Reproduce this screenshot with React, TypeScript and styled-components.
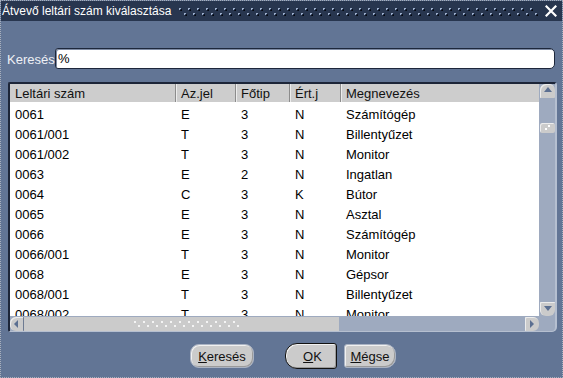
import React from "react";
import styled, { createGlobalStyle } from "styled-components";

const Global = createGlobalStyle`
  html, body { margin: 0; padding: 0; background: #627595; }
  body { font-family: "Liberation Sans", Arial, sans-serif; }
`;

const Window = styled.div`
  width: 563px;
  height: 378px;
  box-sizing: border-box;
  background: #627595;
  border: 1px dotted #a9b0bc;
  display: flex;
  flex-direction: column;
  overflow: hidden;
`;

const TitleBar = styled.div`
  height: 20px;
  flex: none;
  background: #28364f;
  display: flex;
  align-items: center;
  padding: 0 5px 0 1px;
`;

const Title = styled.div`
  color: #ffffff;
  font-size: 12px;
  white-space: nowrap;
`;

const Grip = styled.svg`
  flex: 1;
  height: 12px;
  margin: 0 6px 0 8px;
`;

const Close = styled.svg`
  width: 12px;
  height: 12px;
  flex: none;
`;

const Body = styled.div`
  flex: 1;
  display: flex;
  flex-direction: column;
  padding: 0 5px 0 6px;
`;

const SearchRow = styled.div`
  display: flex;
  align-items: center;
  margin-top: 27px;
  margin-right: 2px;
  height: 21px;
`;

const Label = styled.label`
  color: #eef0f5;
  font-size: 13px;
  width: 48px;
  flex: none;
  padding-top: 1px;
`;

const Input = styled.div`
  flex: 1;
  height: 21px;
  box-sizing: border-box;
  background: #ffffff;
  border: 1px solid #1d273b;
  border-radius: 3px 5px 5px 3px;
  box-shadow: inset 1px 1px 0 #7d8aa3;
  font-size: 13px;
  color: #000;
  line-height: 19px;
  padding-left: 2px;
`;

const Frame = styled.div`
  margin-top: 13px;
  margin-left: 1px;
  height: 250px;
  box-sizing: border-box;
  border-top: 2px solid #1c2538;
  border-left: 2px solid #1c2538;
  border-right: 2px solid #b5bfd0;
  border-bottom: 1px solid #b5bfd0;
  border-radius: 2px 3px 5px 2px;
  background: #9eaabf;
  display: grid;
  grid-template-columns: 1fr 15px;
  grid-template-rows: 1fr 14px;
  gap: 1px;
`;

const Content = styled.div`
  background: #ffffff;
  overflow: hidden;
`;

const COLS = "165px 60px 54px 51px 1fr";

const HeaderRow = styled.div`
  display: grid;
  grid-template-columns: ${COLS};
  height: 18px;
  background: #cdcdcd;
`;

const HeaderCell = styled.div<{ $first?: boolean }>`
  box-sizing: border-box;
  border-left: ${(p) => (p.$first ? "none" : "1px solid #8c8c8c")};
  box-shadow: ${(p) => (p.$first ? "none" : "inset 1px 0 0 #ececec")};
  padding: 2px 0 0 5px;
  font-size: 13px;
  line-height: 16px;
  color: #111;
  white-space: nowrap;
`;

const Rows = styled.div`
  padding-top: 3px;
`;

const Row = styled.div`
  display: grid;
  grid-template-columns: ${COLS};
  height: 20px;
  line-height: 20px;
  font-size: 13px;
  color: #000;
`;

const Cell = styled.div<{ $first?: boolean }>`
  padding-left: ${(p) => (p.$first ? "5px" : "6px")};
  white-space: nowrap;
`;

const VScroll = styled.div`
  display: flex;
  flex-direction: column;
`;

const HScroll = styled.div`
  display: flex;
`;

const ScrollBtn = styled.div<{ $dir: "up" | "down" | "left" | "right" }>`
  flex: none;
  width: ${(p) => (p.$dir === "up" || p.$dir === "down" ? "15px" : "14px")};
  height: 14px;
  box-sizing: border-box;
  background: #cbcbcb;
  display: flex;
  align-items: center;
  justify-content: center;
  border-radius: ${(p) =>
    p.$dir === "up"
      ? "6px 6px 1px 1px"
      : p.$dir === "down"
      ? "1px 1px 6px 6px"
      : p.$dir === "left"
      ? "6px 1px 1px 6px"
      : "1px 6px 6px 1px"};
  border-right: ${(p) => (p.$dir === "left" ? "1px solid #6e7b92" : "none")};
  box-shadow: inset 1px 1px 0 #ececec;
`;

const Spacer = styled.div`
  flex: 1;
`;

const VThumb = styled.div`
  margin-top: 25px;
  height: 10px;
  width: 15px;
  background: #cbcbcb;
  border-radius: 2px;
  box-shadow: inset 1px 1px 0 #ececec;
  background-image:
    radial-gradient(circle at 1px 1px, #ffffff 0.8px, transparent 1.2px),
    radial-gradient(circle at 1px 1px, #ffffff 0.8px, transparent 1.2px);
  background-size: 3px 3px, 3px 3px;
  background-position: 5px 5px, 8px 2px;
  background-repeat: no-repeat;
`;

const HThumb = styled.div`
  width: 315px;
  height: 14px;
  background-color: #cbcbcb;
  display: flex;
  align-items: center;
  justify-content: center;
`;

const HGrip = styled.div`
  width: 108px;
  height: 9px;
  margin-left: 12px;
  background-image:
    radial-gradient(circle at 1px 1px, #f4f4f4 0.8px, transparent 1.2px),
    radial-gradient(circle at 1px 1px, #f4f4f4 0.8px, transparent 1.2px);
  background-size: 9px 9px;
  background-position: 0 1px, 4px 5px;
`;

const Corner = styled.div``;

const ButtonRow = styled.div`
  display: flex;
  align-items: center;
  margin-top: 11px;
  padding-left: 183px;
`;

const Button = styled.button<{ $kind: "pill" | "default" | "right" }>`
  font-family: "Liberation Sans", Arial, sans-serif;
  font-size: 13px;
  color: #111;
  background: #cbcbcb;
  padding: 0;
  box-sizing: border-box;
  width: ${(p) => (p.$kind === "pill" ? "64px" : "52px")};
  height: ${(p) => (p.$kind === "default" ? "26px" : "24px")};
  margin-left: ${(p) => (p.$kind === "default" ? "31px" : p.$kind === "right" ? "7px" : "0")};
  border: ${(p) => (p.$kind === "default" ? "1px solid #111" : "1px solid #aab3c3")};
  border-radius: ${(p) =>
    p.$kind === "pill" ? "9px" : p.$kind === "default" ? "12px 3px 3px 12px" : "3px 10px 10px 3px"};
  box-shadow: inset 1px 1px 0 #f0f0f0, inset -1px -1px 0 #9a9a9a;
  padding-left: ${(p) => (p.$kind === "default" ? "3px" : "0")};
`;

const rows = [
  ["0061", "E", "3", "N", "Számítógép"],
  ["0061/001", "T", "3", "N", "Billentyűzet"],
  ["0061/002", "T", "3", "N", "Monitor"],
  ["0063", "E", "2", "N", "Ingatlan"],
  ["0064", "C", "3", "K", "Bútor"],
  ["0065", "E", "3", "N", "Asztal"],
  ["0066", "E", "3", "N", "Számítógép"],
  ["0066/001", "T", "3", "N", "Monitor"],
  ["0068", "E", "3", "N", "Gépsor"],
  ["0068/001", "T", "3", "N", "Billentyűzet"],
  ["0068/002", "T", "3", "N", "Monitor"],
];

const headers = ["Leltári szám", "Az.jel", "Főtip", "Ért.j", "Megnevezés"];

const Tri = ({ dir }: { dir: "up" | "down" | "left" | "right" }) => {
  const pts =
    dir === "up"
      ? "1,6 9,6 5,1"
      : dir === "down"
      ? "1,2 9,2 5,7"
      : dir === "left"
      ? "6,1 6,9 2,5"
      : "3,1 3,9 7,5";
  return (
    <svg width="10" height="10" viewBox="0 0 10 10">
      <polygon points={pts} fill="#5b6f91" />
    </svg>
  );
};

export default function App() {
  return (
    <>
      <Global />
      <Window>
        <TitleBar>
          <Title>Átvevő leltári szám kiválasztása</Title>
          <Grip>
            <defs>
              <pattern id="tgrip" width="9" height="12" patternUnits="userSpaceOnUse">
                <rect x="0" y="3" width="2" height="2" fill="#9fb0cc" />
                <rect x="1" y="4" width="1" height="1" fill="#2c3d5c" />
                <rect x="2" y="5" width="1" height="1" fill="#05090f" />
                <rect x="1" y="5" width="1" height="1" fill="#0b1220" />
                <rect x="2" y="4" width="1" height="1" fill="#0b1220" />
                <rect x="5" y="8" width="2" height="2" fill="#9fb0cc" />
                <rect x="6" y="9" width="1" height="1" fill="#2c3d5c" />
                <rect x="7" y="10" width="1" height="1" fill="#05090f" />
                <rect x="6" y="10" width="1" height="1" fill="#0b1220" />
                <rect x="7" y="9" width="1" height="1" fill="#0b1220" />
              </pattern>
            </defs>
            <rect x="0" y="0" width="100%" height="12" fill="url(#tgrip)" />
          </Grip>
          <Close viewBox="0 0 12 12">
            <path d="M1.5 1.5 L10.5 10.5 M10.5 1.5 L1.5 10.5" stroke="#ffffff" strokeWidth="2.2" strokeLinecap="square" />
          </Close>
        </TitleBar>
        <Body>
          <SearchRow>
            <Label>Keresés</Label>
            <Input>%</Input>
          </SearchRow>
          <Frame>
            <Content>
              <HeaderRow>
                {headers.map((h, i) => (
                  <HeaderCell key={h} $first={i === 0}>
                    {h}
                  </HeaderCell>
                ))}
              </HeaderRow>
              <Rows>
                {rows.map((r) => (
                  <Row key={r[0]}>
                    {r.map((c, i) => (
                      <Cell key={i} $first={i === 0}>
                        {c}
                      </Cell>
                    ))}
                  </Row>
                ))}
              </Rows>
            </Content>
            <VScroll>
              <ScrollBtn $dir="up">
                <Tri dir="up" />
              </ScrollBtn>
              <VThumb />
              <Spacer />
              <ScrollBtn $dir="down">
                <Tri dir="down" />
              </ScrollBtn>
            </VScroll>
            <HScroll>
              <ScrollBtn $dir="left">
                <Tri dir="left" />
              </ScrollBtn>
              <HThumb>
                <HGrip />
              </HThumb>
              <Spacer />
              <ScrollBtn $dir="right">
                <Tri dir="right" />
              </ScrollBtn>
            </HScroll>
            <Corner />
          </Frame>
          <ButtonRow>
            <Button $kind="pill">
              <u>K</u>eresés
            </Button>
            <Button $kind="default">
              <u>O</u>K
            </Button>
            <Button $kind="right">
              <u>M</u>égse
            </Button>
          </ButtonRow>
        </Body>
      </Window>
    </>
  );
}
